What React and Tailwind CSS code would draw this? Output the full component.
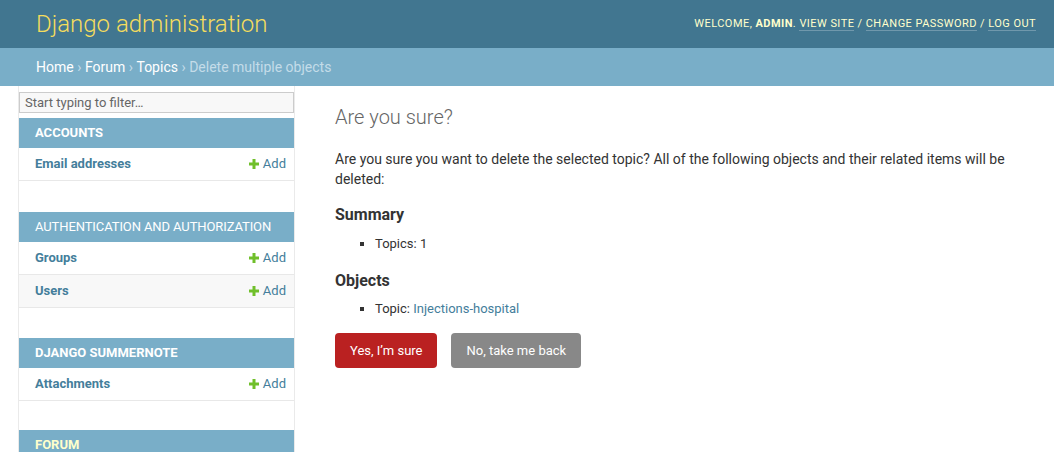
import React from "react";

function Plus() {
  return (
    <svg width="10" height="10" viewBox="0 0 10 10" className="inline-block mr-[4px]">
      <rect x="3.5" y="0" width="3" height="10" fill="#70bf2b" />
      <rect x="0" y="3.5" width="10" height="3" fill="#70bf2b" />
    </svg>
  );
}

function Row({ name, alt }) {
  return (
    <div
      className={`h-[33px] flex items-center justify-between pl-[16px] pr-[8px] border-b border-[#e8e8e8] text-[13px] ${
        alt ? "bg-[#f8f8f8]" : "bg-white"
      }`}
    >
      <span className="font-bold text-[#447e9b]">{name}</span>
      <span className="flex items-center text-[#447e9b]">
        <Plus />
        Add
      </span>
    </div>
  );
}

function Caption({ children, bold, current }) {
  return (
    <div
      className={`h-[30px] flex items-center pl-[16px] bg-[#79aec8] text-[13px] uppercase ${
        current ? "text-[#ffffcc] font-bold" : bold ? "text-white font-bold" : "text-white tracking-[-0.1px]"
      }`}
    >
      {children}
    </div>
  );
}

export default function App() {
  return (
    <div className="font-['Roboto',sans-serif] min-h-screen bg-white text-[#333]">
      <header className="h-[48px] flex items-center justify-between pl-[36px] pr-[18px] bg-[#417690]">
        <div className="text-[24px] font-light text-[#f5dd5d] leading-none">Django administration</div>
        <div className="text-[11px] uppercase tracking-[0.45px] text-[#ffffcc]">
          Welcome, <strong className="font-bold">admin</strong>.{" "}
          <span className="border-b border-[rgba(255,255,255,0.25)]">View site</span> /{" "}
          <span className="border-b border-[rgba(255,255,255,0.25)]">Change password</span> /{" "}
          <span className="border-b border-[rgba(255,255,255,0.25)]">Log out</span>
        </div>
      </header>
      <div className="h-[38px] flex items-center pl-[36px] bg-[#79aec8] text-[14px] text-[#c4dce8]">
        <span className="text-white">Home</span>
        <span className="mx-[3.5px]">›</span>
        <span className="text-white">Forum</span>
        <span className="mx-[3.5px]">›</span>
        <span className="text-white">Topics</span>
        <span className="mx-[3.5px]">›</span>
        <span>Delete multiple objects</span>
      </div>
      <div className="flex">
        <div className="w-[19px] shrink-0 border-r border-[#eaeaea] min-h-[366px]"></div>
        <nav className="w-[276px] shrink-0 border-r border-[#eaeaea] pt-[6px]">
          <div className="h-[21px] border border-[#cccccc] bg-[#f8f8f8] px-[5px] flex items-center text-[13px] text-[#666]">
            Start typing to filter…
          </div>
          <div className="mt-[5px]">
            <Caption bold>Accounts</Caption>
            <Row name="Email addresses" />
          </div>
          <div className="mt-[31px]">
            <Caption>Authentication and Authorization</Caption>
            <Row name="Groups" />
            <Row name="Users" alt />
          </div>
          <div className="mt-[30px]">
            <Caption bold>Django Summernote</Caption>
            <Row name="Attachments" />
          </div>
          <div className="mt-[29px]">
            <Caption current>Forum</Caption>
          </div>
        </nav>
        <main className="flex-1 pl-[40px] pt-[19px]">
          <h1 className="text-[20px] font-light text-[#666] leading-[24px]">Are you sure?</h1>
          <p className="mt-[20px] text-[14px] leading-[20px] text-[#333] pr-[20px]">
            Are you sure you want to delete the selected topic? All of the following objects and their related items will be
            deleted:
          </p>
          <h2 className="mt-[16px] text-[16px] font-bold leading-[20px] text-[#333]">Summary</h2>
          <ul className="mt-[9px] pl-[40px] list-[square] text-[13px] leading-[20px]">
            <li>Topics: 1</li>
          </ul>
          <h2 className="mt-[17px] text-[16px] font-bold leading-[20px] text-[#333]">Objects</h2>
          <ul className="mt-[8px] pl-[40px] list-[square] text-[13px] leading-[20px]">
            <li>
              Topic: <span className="text-[#447e9b]">Injections-hospital</span>
            </li>
          </ul>
          <div className="mt-[14px] flex items-center gap-[14px]">
            <button className="h-[35px] px-[15px] rounded-[4px] bg-[#ba2121] text-white text-[13px]">Yes, I’m sure</button>
            <button className="h-[35px] px-[15px] rounded-[4px] bg-[#888888] text-white text-[13px]">No, take me back</button>
          </div>
        </main>
      </div>
    </div>
  );
}
